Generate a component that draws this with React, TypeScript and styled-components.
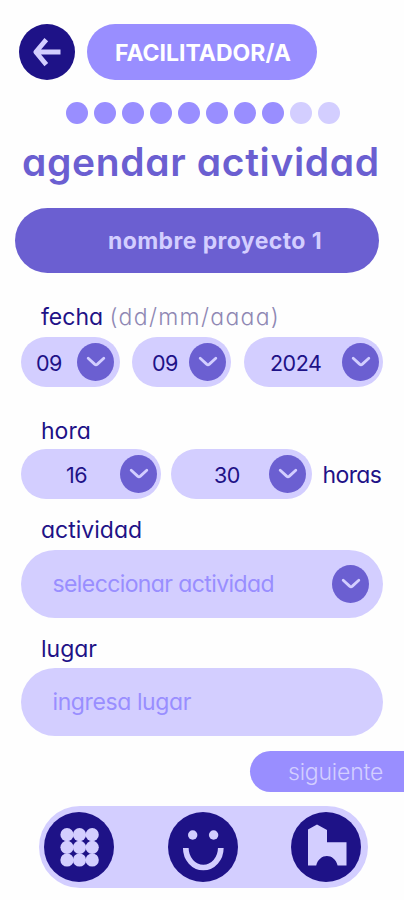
import React from "react";
import styled, { createGlobalStyle } from "styled-components";

const color = {
  navy: "#1e1287",
  violet: "#6b5fd1",
  lavender: "#998eff",
  pale: "#d3ceff",
};

const GlobalStyle = createGlobalStyle`
  * { box-sizing: border-box; }
  body { margin: 0; background: #fefefe; }
  button { border: 0; padding: 0; font: inherit; letter-spacing: inherit; }
`;

const Screen = styled.main`
  width: 404px;
  height: 900px;
  overflow: hidden;
  display: flex;
  flex-direction: column;
  color: ${color.navy};
  font-family: Inter, "Noto Sans", sans-serif;
  font-feature-settings: "cv11" 1, "ss03" 1;
  font-size: 23px;
  font-weight: 400;
  line-height: 28px;
  white-space: nowrap;
`;

const Header = styled.header`
  display: flex;
  gap: 12px;
  padding: 24px 0 0 19px;
`;

const RoundButton = styled.button<{ $size: number }>`
  width: ${(p) => p.$size}px;
  height: ${(p) => p.$size}px;
  border-radius: 50%;
  background: ${color.navy};
  display: grid;
  place-items: center;
  flex: none;
`;

const Role = styled.div`
  width: 230px;
  height: 56px;
  border-radius: 28px;
  padding: 2px 0 0 2px;
  background: ${color.lavender};
  color: #fff;
  display: grid;
  place-items: center;
  font-size: 23px;
  font-weight: 700;
`;

const Steps = styled.div`
  display: flex;
  gap: 6px;
  padding: 22px 0 0 65.5px;
`;

const Step = styled.i<{ $done: boolean }>`
  width: 22px;
  height: 22px;
  border-radius: 50%;
  background: ${(p) => (p.$done ? color.lavender : color.pale)};
`;

const Title = styled.h1`
  margin: 13px 0 1px 22px;
  height: 50px;
  line-height: 50px;
  font-size: 39px;
  font-weight: 600;
  letter-spacing: 0.65px;
  color: ${color.violet};
`;

const Project = styled.div`
  margin: 20px 0 0 15px;
  width: 364px;
  height: 65px;
  border-radius: 33px;
  padding-left: 93px;
  background: ${color.violet};
  color: ${color.pale};
  display: flex;
  align-items: center;
  font-weight: 700;
  letter-spacing: 0.4px;
`;

const Label = styled.label<{ $top: number }>`
  margin: ${(p) => p.$top}px 0 0 41px;
  height: 28px;
`;

const Hint = styled.span`
  color: #8f88b4;
  font-weight: 300;
  letter-spacing: 1.3px;
`;

const Row = styled.div<{ $top: number }>`
  display: flex;
  align-items: center;
  margin: ${(p) => p.$top}px 0 0 21px;
`;

const Select = styled.div<{ $width: number; $before?: number; $inset: number; $end: number }>`
  width: ${(p) => p.$width}px;
  margin-left: ${(p) => p.$before ?? 0}px;
  height: 50px;
  border-radius: 25px;
  padding: 0 ${(p) => p.$end}px 0 ${(p) => p.$inset}px;
  background: ${color.pale};
  display: flex;
  align-items: center;
  justify-content: space-between;
  font-size: 21.5px;
  letter-spacing: -0.5px;
`;

const Value = styled.span`
  padding-top: 2px;
`;

const Field = styled.div<{ $top: number; $track: number }>`
  margin: ${(p) => p.$top}px 0 0 21px;
  width: 362px;
  height: 68px;
  border-radius: 34px;
  padding: 0 14px 0 31.5px;
  background: ${color.pale};
  color: ${color.lavender};
  display: flex;
  align-items: center;
  justify-content: space-between;
  letter-spacing: ${(p) => p.$track}px;
`;

const Toggle = styled.button`
  width: 37px;
  height: 38px;
  border-radius: 50%;
  background: ${color.violet};
  display: grid;
  place-items: center;
`;

const Unit = styled.span`
  margin: 2px 0 0 10.5px;
  letter-spacing: -0.6px;
`;

const Next = styled.button`
  align-self: flex-end;
  margin-top: 15px;
  width: 154px;
  height: 41px;
  border-radius: 20.5px 0 0 20.5px;
  padding-left: 38px;
  background: ${color.lavender};
  color: ${color.pale};
  text-align: left;
  font-weight: 300;
  letter-spacing: -0.2px;
`;

const Nav = styled.nav`
  margin: 14px 0 0 39px;
  width: 329px;
  height: 82px;
  border-radius: 41px;
  padding: 0 7px 0 5px;
  background: ${color.pale};
  display: flex;
  align-items: center;
  justify-content: space-between;
`;

const Chevron = () => (
  <Toggle aria-label="abrir">
    <svg width="20" height="12" viewBox="0 0 20 12" fill="none" stroke={color.pale} strokeWidth="2.8" strokeLinecap="round" strokeLinejoin="round">
      <path d="M2.2 2.2 L8.6 8.1 Q10 9.3 11.4 8.1 L17.8 2.2" />
    </svg>
  </Toggle>
);

const BackIcon = () => (
  <svg width="56" height="56" viewBox="0 0 56 56" fill="none" stroke={color.pale} strokeWidth="4.8" strokeLinejoin="round">
    <path d="M27.3 15.6 L16.8 28 L27.3 40.6 M16.8 28 H41.5" />
  </svg>
);

const GridIcon = () => (
  <svg width="70" height="70" viewBox="0 0 70 70" fill={color.pale}>
    {[22.7, 35.3, 48].map((y) =>
      [23, 35.5, 48.2].map((x) => <circle key={`${x}-${y}`} cx={x} cy={y} r="6.6" />)
    )}
  </svg>
);

const SmileIcon = () => (
  <svg width="70" height="70" viewBox="0 0 70 70" fill="none">
    <circle cx="24.7" cy="23" r="4.7" fill={color.pale} />
    <circle cx="45.6" cy="23" r="4.7" fill={color.pale} />
    <path d="M17.8 36 A17.5 19.5 0 0 0 52.8 36" stroke={color.pale} strokeWidth="5.7" />
  </svg>
);

const HouseIcon = () => (
  <svg width="70" height="70" viewBox="0 0 70 70" fill={color.pale}>
    <path d="M17 17.5 L26 12.5 L36 18 V30.3 H55.5 V53.4 H46.6 C43.5 40.7 28.3 40.7 25.2 53.4 H17 Z" />
  </svg>
);

export default function App() {
  return (
    <>
      <GlobalStyle />
      <Screen>
        <Header>
          <RoundButton $size={56} aria-label="volver"><BackIcon /></RoundButton>
          <Role>FACILITADOR/A</Role>
        </Header>
        <Steps>
          {Array.from({ length: 10 }, (_, i) => <Step key={i} $done={i < 8} />)}
        </Steps>
        <Title>agendar actividad</Title>
        <Project>nombre proyecto 1</Project>
        <Label $top={30}>fecha <Hint>(dd/mm/aaaa)</Hint></Label>
        <Row $top={6}>
          <Select $width={99} $inset={15} $end={6}><Value>09</Value><Chevron /></Select>
          <Select $width={99} $before={12} $inset={20} $end={5}><Value>09</Value><Chevron /></Select>
          <Select $width={139} $before={13} $inset={26} $end={4}><Value>2024</Value><Chevron /></Select>
        </Row>
        <Label $top={30}>hora</Label>
        <Row $top={4}>
          <Select $width={140} $inset={45} $end={4}><Value>16</Value><Chevron /></Select>
          <Select $width={141} $before={10} $inset={43} $end={6}><Value>30</Value><Chevron /></Select>
          <Unit>horas</Unit>
        </Row>
        <Label $top={17}>actividad</Label>
        <Field $top={6} $track={-0.6}>seleccionar actividad<Chevron /></Field>
        <Label $top={17}>lugar</Label>
        <Field $top={5} $track={-0.4}>ingresa lugar</Field>
        <Next>siguiente</Next>
        <Nav>
          <RoundButton $size={70} aria-label="menú"><GridIcon /></RoundButton>
          <RoundButton $size={70} aria-label="ánimo"><SmileIcon /></RoundButton>
          <RoundButton $size={70} aria-label="inicio"><HouseIcon /></RoundButton>
        </Nav>
      </Screen>
    </>
  );
}
